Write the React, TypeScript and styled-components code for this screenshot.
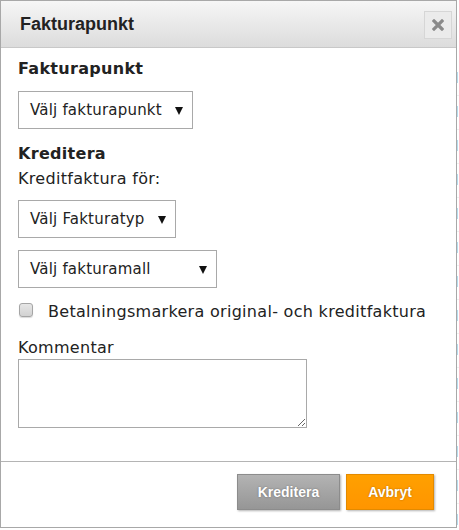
import React from 'react';
import styled, { createGlobalStyle } from 'styled-components';

const GlobalStyle = createGlobalStyle`
  html, body {
    margin: 0;
    padding: 0;
    background: #fff;
  }
  body {
    font-family: "DejaVu Sans", Verdana, sans-serif;
    color: #222;
  }
`;

const Page = styled.div`
  position: relative;
  width: 459px;
  height: 530px;
  overflow: hidden;
`;

const BackTable = styled.div`
  display: flex;
  flex-direction: column;
  padding-top: 62px;
`;

const BackRow = styled.div`
  display: flex;
  justify-content: flex-end;
  height: 33px;
  border-bottom: 1px solid #f0f0f0;
  &::after {
    content: '';
    width: 2px;
    height: 11px;
    margin: 10px 1px 0 0;
    background: #b8dcee;
  }
`;

const Dialog = styled.div`
  position: absolute;
  top: 0;
  left: 0;
  width: 455px;
  height: 526px;
  border: 1px solid #a8a8a8;
  background: #fff;
  display: flex;
  flex-direction: column;
`;

const Header = styled.div`
  box-sizing: border-box;
  height: 47px;
  display: flex;
  align-items: center;
  justify-content: space-between;
  padding: 1px 4px 0 19px;
  background: linear-gradient(#f6f6f6, #dcdcdc);
  border-bottom: 1px solid #c8c8c8;
`;

const Title = styled.h1`
  margin: 0;
  font-family: "Liberation Sans", Arial, sans-serif;
  font-size: 18px;
  font-weight: bold;
  color: #222;
`;

const CloseButton = styled.button`
  width: 28px;
  height: 28px;
  padding: 0;
  display: flex;
  align-items: center;
  justify-content: center;
  border: 1px solid #d6d6d6;
  background: #ebebeb;
  cursor: pointer;
`;

const Body = styled.div`
  flex: 1;
  display: flex;
  flex-direction: column;
  align-items: flex-start;
  padding: 12px 17px 0;
  font-size: 16px;
  line-height: 18px;
  letter-spacing: 0.3px;
`;

const SectionTitle = styled.div<{ $mt?: number }>`
  font-weight: bold;
  margin-top: ${(p) => p.$mt ?? 0}px;
`;

const Text = styled.div<{ $mt?: number }>`
  margin-top: ${(p) => p.$mt ?? 0}px;
`;

const SelectBox = styled.div<{ $w: number; $mt: number }>`
  box-sizing: border-box;
  width: ${(p) => p.$w}px;
  height: 38px;
  margin-top: ${(p) => p.$mt}px;
  display: flex;
  align-items: center;
  justify-content: space-between;
  padding: 0 9px 0 11px;
  border: 1px solid #a9a9a9;
  font-size: 15px;
  letter-spacing: 0.2px;
  color: #222;
  cursor: pointer;
`;

const CheckRow = styled.label`
  display: flex;
  align-items: flex-start;
  gap: 15px;
  margin-top: 15px;
`;

const Check = styled.input`
  appearance: none;
  margin: 0 0 0 1px;
  width: 14px;
  height: 14px;
  border: 1px solid #a5a5a5;
  border-radius: 3px;
  background: linear-gradient(#e6e6e6, #d2d2d2);
  box-shadow: 0 1px 1px rgba(0, 0, 0, 0.15);
`;

const CommentArea = styled.textarea`
  box-sizing: border-box;
  width: 289px;
  height: 69px;
  margin-top: 2px;
  border: 1px solid #a9a9a9;
  font-family: inherit;
  font-size: 14px;
`;

const Footer = styled.div`
  box-sizing: border-box;
  height: 66px;
  display: flex;
  justify-content: flex-end;
  align-items: flex-start;
  gap: 6px;
  padding: 12px 22px 0 0;
  border-top: 1px solid #b4b4b4;
`;

const ActionButton = styled.button<{ $variant: 'gray' | 'orange' }>`
  height: 36px;
  padding: 0 ${(p) => (p.$variant === 'gray' ? 20 : 21)}px;
  font-family: "Liberation Sans", Arial, sans-serif;
  font-size: 14px;
  font-weight: bold;
  color: #fff;
  text-shadow: 0 0 2px rgba(0, 0, 0, 0.35);
  cursor: pointer;
  box-shadow: 1px 1px 2px rgba(0, 0, 0, 0.3);
  border: 1px solid ${(p) => (p.$variant === 'gray' ? '#8c8c8c' : '#e38a00')};
  background: ${(p) =>
    p.$variant === 'gray'
      ? 'linear-gradient(#b3b3b3, #969696)'
      : 'linear-gradient(#ffa000, #ff9500)'};
`;

const Caret = () => (
  <svg width="8" height="9" viewBox="0 0 8 9">
    <path d="M0 1 L8 1 L4 9 Z" fill="#111" />
  </svg>
);

const CloseIcon = () => (
  <svg width="12" height="12" viewBox="0 0 12 12">
    <path d="M2 2 L10 10 M10 2 L2 10" stroke="#8a8a8a" strokeWidth="3.2" strokeLinecap="square" />
  </svg>
);

const Select = ({ label, width, mt }: { label: string; width: number; mt: number }) => (
  <SelectBox $w={width} $mt={mt}>
    <span>{label}</span>
    <Caret />
  </SelectBox>
);

const App = () => (
  <Page>
    <GlobalStyle />
    <BackTable>
      {Array.from({ length: 14 }).map((_, i) => (
        <BackRow key={i} />
      ))}
    </BackTable>
    <Dialog>
      <Header>
        <Title>Fakturapunkt</Title>
        <CloseButton aria-label="Stäng">
          <CloseIcon />
        </CloseButton>
      </Header>
      <Body>
        <SectionTitle>Fakturapunkt</SectionTitle>
        <Select label="Välj fakturapunkt" width={175} mt={13} />
        <SectionTitle $mt={16}>Kreditera</SectionTitle>
        <Text $mt={7}>Kreditfaktura för:</Text>
        <Select label="Välj Fakturatyp" width={158} mt={12} />
        <Select label="Välj fakturamall" width={199} mt={12} />
        <CheckRow>
          <Check type="checkbox" />
          Betalningsmarkera original- och kreditfaktura
        </CheckRow>
        <Text $mt={18}>Kommentar</Text>
        <CommentArea />
      </Body>
      <Footer>
        <ActionButton $variant="gray">Kreditera</ActionButton>
        <ActionButton $variant="orange">Avbryt</ActionButton>
      </Footer>
    </Dialog>
  </Page>
);

export default App;
